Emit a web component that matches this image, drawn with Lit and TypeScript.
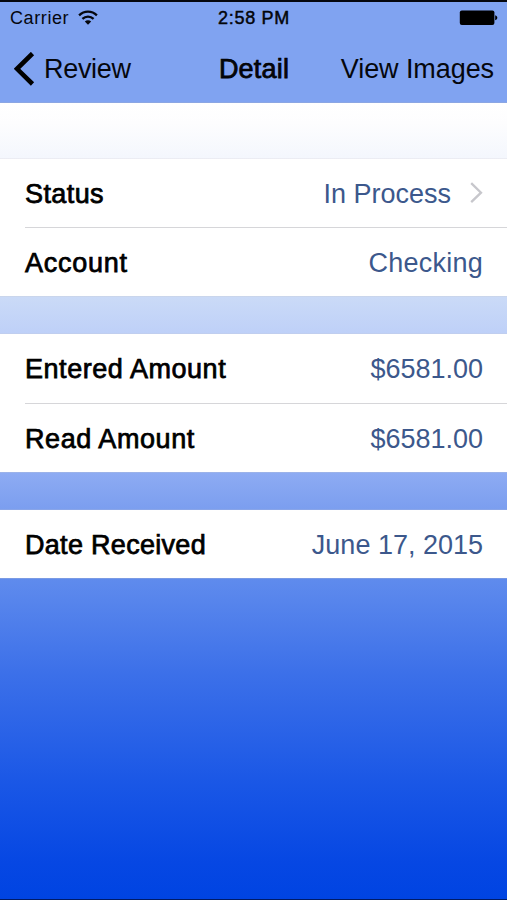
import { LitElement, html, css, nothing } from "lit";
import { customElement, property } from "lit/decorators.js";
import { styleMap } from "lit/directives/style-map.js";

@customElement("status-bar")
class StatusBar extends LitElement {
  static styles = css`
    :host { display: grid; grid-template-columns: 1fr auto 1fr; align-items: center; height: 32px; padding: 0 9px 0 10px; font-size: 18px; }
    .carrier { display: flex; align-items: center; gap: 9px; letter-spacing: 0.6px; }
    .time { letter-spacing: 0.72px; -webkit-text-stroke: 0.45px #000; }
    .battery { justify-self: end; display: block; }
    svg { display: block; }
  `;
  render() {
    return html`
      <div class="carrier">
        <span>Carrier</span>
        <svg width="20" height="16" viewBox="0 0 20 16" fill="none" stroke="#05070d" stroke-width="2.3">
          <path d="M1.1 5.4C6.2 0.4 13.8 0.4 18.9 5.4" />
          <path d="M4.4 8.9C7.6 5.9 12.4 5.9 15.6 8.9" />
          <path d="M10 14.8L6.8 11.6C8.6 9.9 11.4 9.9 13.2 11.6Z" fill="#05070d" stroke="none" />
        </svg>
      </div>
      <div class="time">2:58 PM</div>
      <svg class="battery" width="39" height="16" viewBox="0 0 39 16">
        <rect x="0.8" y="0.4" width="34.6" height="14.6" rx="2" fill="#000" />
        <path d="M36.2 5.3C39 6 39 9.6 36.2 10.3Z" fill="#000" />
      </svg>
    `;
  }
}

@customElement("nav-bar")
class NavBar extends LitElement {
  static styles = css`
    :host { display: grid; grid-template-columns: 1fr auto 1fr; align-items: center; height: 69px; padding: 0 13px 0 14px; font-size: 27px; }
    .back { display: flex; align-items: center; gap: 9px; letter-spacing: -0.3px; }
    .text { padding-top: 2px; }
    .title { -webkit-text-stroke: 0.75px #000; letter-spacing: 0.2px; }
    .action { justify-self: end; white-space: nowrap; letter-spacing: -0.08px; }
    svg { display: block; }
  `;
  render() {
    return html`
      <div class="back">
        <svg width="21" height="34" viewBox="0 0 21 34"><path d="M18.5 1.5L3 16.8L18.5 32" fill="none" stroke="#000" stroke-width="4.6" /></svg>
        <span class="text">Review</span>
      </div>
      <div class="text title">Detail</div>
      <div class="text action">View Images</div>
    `;
  }
}

@customElement("detail-row")
class DetailRow extends LitElement {
  @property() label = "";
  @property() value = "";
  @property({ type: Number }) tracking = 0;
  @property({ type: Number }) valueTracking = 0;
  @property({ type: Boolean }) link = false;
  static styles = css`
    :host { display: flex; align-items: center; justify-content: space-between; height: 68.5px; margin-left: 25px; padding-right: 24px; font-size: 27px; }
    .label { padding-top: 3px; color: #000; -webkit-text-stroke: 0.75px #000; }
    .value { display: flex; align-items: center; gap: 19px; color: #3c588c; }
    .text { padding-top: 3px; }
    svg { display: block; }
  `;
  render() {
    return html`
      <span class="label" style=${styleMap({ letterSpacing: `${this.tracking}px` })}>${this.label}</span>
      <span class="value">
        <span class="text" style=${styleMap({ letterSpacing: `${this.valueTracking}px` })}>${this.value}</span>
        ${this.link
          ? html`<svg width="13" height="22" viewBox="0 0 13 22"><path d="M1.2 1.2L11 10.7L1.2 20.2" fill="none" stroke="#c7c7cc" stroke-width="2.3" /></svg>`
          : nothing}
      </span>
    `;
  }
}

interface Row { label: string; value: string; tracking: number; valueTracking?: number; link?: boolean }

const groups: Row[][] = [
  [
    { label: "Status", value: "In Process", tracking: 0.4, link: true },
    { label: "Account", value: "Checking", tracking: 0.75, valueTracking: 0.25 },
  ],
  [
    { label: "Entered Amount", value: "$6581.00", tracking: 0.54 },
    { label: "Read Amount", value: "$6581.00", tracking: 0.56 },
  ],
  [{ label: "Date Received", value: "June 17, 2015", tracking: 0.3 }],
];

@customElement("app-root")
class AppRoot extends LitElement {
  static styles = css`
    :host {
      display: flex; flex-direction: column; box-sizing: border-box; height: 900px;
      border-top: 2px solid #05070e; border-bottom: 1px solid #001b66;
      font-family: "Liberation Sans", Arial, sans-serif; color: #05070d;
    }
    .header { height: 101px; box-sizing: border-box; background: #80a3f1; border-bottom: 1px solid #8ba6e3; }
    .content {
      flex: 1; display: flex; flex-direction: column; gap: 38px;
      background: linear-gradient(#fff 0, #fdfdfe 20px, #f4f7fd 54px, #cadaf7 195px, #bed0f8 231px, #8dabf3 370px, #7b9eef 406px, #5f8bed 476px, #3c70e9 570px, #1a57e6 680px, #0647e3 760px, #0044e2 100%);
    }
    .group { background: #fff; box-shadow: 0 -1px 0 #c8c7cc30, 0 1px 0 #c8c7cc40; }
    .group:first-child { margin-top: 56px; height: 137px; }
    .group:first-child detail-row { height: 68px; }
    .group:last-child { height: 68px; }
    .line { height: 1px; margin-left: 25px; background: #d6d6d9; }
  `;
  render() {
    return html`
      <div class="header">
        <status-bar></status-bar>
        <nav-bar></nav-bar>
      </div>
      <div class="content">
        ${groups.map((rows) => html`
          <div class="group">
            ${rows.map((r, i) => html`
              ${i ? html`<div class="line"></div>` : nothing}
              <detail-row .label=${r.label} .value=${r.value} .tracking=${r.tracking} .valueTracking=${r.valueTracking ?? 0} .link=${!!r.link}></detail-row>
            `)}
          </div>
        `)}
      </div>
    `;
  }
}
